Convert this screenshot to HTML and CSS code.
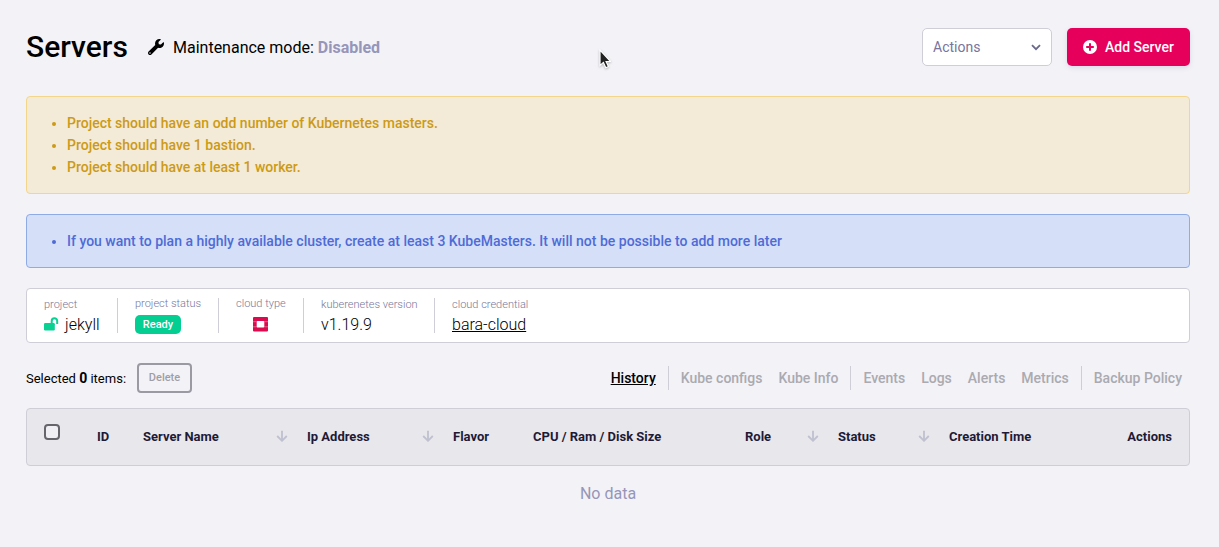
FILE: index.html
```html
<!DOCTYPE html>
<html lang="en">
<head>
<meta charset="utf-8">
<title>Servers</title>
<link rel="stylesheet" href="styles.css">
</head>
<body>
<svg class="sprite" aria-hidden="true">
  <symbol id="sort" viewBox="0 0 12 12"><path d="M6 .8v10M1.200 6 6 10.800 10.800 6" fill="none" stroke="currentColor" stroke-width="1.800"/></symbol>
</svg>
<main class="page">
  <header class="header">
    <h1 class="title">Servers</h1>
    <div class="maintenance">
      <svg class="wrench" viewBox="0 0 512 512"><path fill="currentColor" d="M507.730 109.100c-2.240-9.030-13.540-12.090-20.120-5.510l-74.360 74.360-67.880-11.310-11.310-67.880 74.360-74.360c6.620-6.620 3.430-17.900-5.660-20.160-47.380-11.740-99.550.910-136.580 37.930-39.640 39.640-50.550 97.100-34.050 147.200L18.740 402.760c-24.990 24.990-24.990 65.510 0 90.500 24.990 24.990 65.510 24.990 90.500 0l213.210-213.210c50.120 16.710 107.470 5.680 147.370-34.220 37.070-37.070 49.700-89.320 37.910-136.730zM64 472c-13.250 0-24-10.750-24-24 0-13.260 10.750-24 24-24s24 10.740 24 24c0 13.250-10.750 24-24 24z"/></svg>
      <span>Maintenance mode: <b>Disabled</b></span>
    </div>
    <button class="select"><span>Actions</span>
      <svg class="chevron" viewBox="0 0 10 7"><path d="M1 1.200l4 4 4-4" fill="none" stroke="currentColor" stroke-width="1.800"/></svg>
    </button>
    <button class="add">
      <svg class="plus" viewBox="0 0 14 14"><circle cx="7" cy="7" r="7" fill="currentColor"/><path class="plus-sign" d="M7 3.200v7.600M3.200 7h7.600"/></svg>
      <span>Add Server</span>
    </button>
  </header>

  <ul class="alert warning">
    <li>Project should have an odd number of Kubernetes masters.</li>
    <li>Project should have 1 bastion.</li>
    <li>Project should have at least 1 worker.</li>
  </ul>
  <ul class="alert info">
    <li>If you want to plan a highly available cluster, create at least 3 KubeMasters. It will not be possible to add more later</li>
  </ul>

  <section class="details">
    <div class="detail project"><span class="label">project</span>
      <span class="value"><svg class="lock" viewBox="0 0 15 14"><path d="M7.700 6.500V3.900a2.750 2.750 0 0 1 5.500 0V7" fill="none" stroke="currentColor" stroke-width="2"/><rect y="6" width="10.800" height="7.500" rx="1.200" fill="currentColor"/></svg>jekyll</span>
    </div>
    <div class="detail status"><span class="label">project status</span><span class="badge">Ready</span></div>
    <div class="detail cloud"><span class="label">cloud type</span>
      <svg class="openstack" viewBox="0 0 15 15"><path fill="currentColor" fill-rule="evenodd" d="M1 0h13a1 1 0 0 1 1 1v12.500a1 1 0 0 1-1 1H1a1 1 0 0 1-1-1V1a1 1 0 0 1 1-1zM4.500 4a.8.8 0 0 0-.8.8v5a.8.8 0 0 0 .8.8h6a.8.8 0 0 0 .8-.8v-5a.8.8 0 0 0-.8-.8z"/><path d="M0 4.700h3.700M11.300 4.700H15M0 9.800h3.700M11.300 9.800H15" stroke="#fff" stroke-opacity=".7" stroke-width=".5"/></svg>
    </div>
    <div class="detail version"><span class="label">kuberenetes version</span><span class="value">v1.19.9</span></div>
    <div class="detail credential"><span class="label">cloud credential</span><a class="value">bara-cloud</a></div>
  </section>

  <div class="toolbar">
    <span class="selected">Selected <b>0</b> items:</span>
    <button class="delete">Delete</button>
    <nav class="tabs">
      <div class="group"><a class="active">History</a></div>
      <div class="group"><a>Kube configs</a><a>Kube Info</a></div>
      <div class="group"><a>Events</a><a>Logs</a><a>Alerts</a><a>Metrics</a></div>
      <div class="group"><a>Backup Policy</a></div>
    </nav>
  </div>

  <div class="table-head">
    <span class="checkbox"></span>
    <span>ID</span>
    <span class="sortable">Server Name<svg><use href="#sort"/></svg></span>
    <span class="sortable">Ip Address<svg><use href="#sort"/></svg></span>
    <span>Flavor</span>
    <span>CPU / Ram / Disk Size</span>
    <span class="sortable">Role<svg><use href="#sort"/></svg></span>
    <span class="sortable">Status<svg><use href="#sort"/></svg></span>
    <span>Creation Time</span>
    <span>Actions</span>
  </div>
  <p class="empty">No data</p>
</main>
<svg class="cursor" viewBox="0 0 12 20"><path d="M1 1v15.500l3.400-3.100 2.400 5.300 2.600-1.200-2.300-5h4.500z" fill="#222" stroke="#fff" stroke-width="1.200"/></svg>
</body>
</html>
```
FILE: styles.css
```css
* { box-sizing: border-box; }

body {
  margin: 0;
  height: 547px;
  overflow: hidden;
  background: #f3f2f7;
  color: #000;
  font-family: Roboto, sans-serif;
}

button { font-family: inherit; }
svg { flex: none; }
.sprite { display: none; }

.page { padding: 28px 29px 0 26px; }

.header { display: flex; align-items: center; height: 38px; }
.title { margin: 0; font-size: 30px; line-height: 38px; font-weight: 500; width: 122px; }
.maintenance { display: flex; align-items: center; gap: 9px; font-size: 16px; }
.maintenance b { color: #9696ba; font-weight: 700; }
.wrench { width: 16px; height: 16px; }

.select {
  display: flex;
  align-items: center;
  justify-content: space-between;
  width: 130px;
  height: 38px;
  margin-left: auto;
  padding: 0 10px;
  border: 1px solid #cfced8;
  border-radius: 5px;
  background: #fff;
  color: #76759b;
  font-size: 14px;
}
.chevron { width: 10px; height: 7px; color: #69698a; }

.add {
  display: flex;
  align-items: center;
  gap: 8px;
  width: 123px;
  height: 38px;
  margin-left: 15px;
  padding: 0 0 0 16px;
  border: 0;
  border-radius: 5px;
  background: #e6005c;
  box-shadow: 0 2px 5px rgba(80, 80, 150, .13);
  color: #fff;
  font-size: 14px;
  font-weight: 500;
}
.plus { width: 14px; height: 14px; }
.plus-sign { stroke: #e6005c; stroke-width: 2; }

.alert {
  margin: 0;
  padding: 15px 0 15px 40px;
  border: 1px solid;
  border-radius: 4px;
  font-size: 14px;
  line-height: 22px;
  font-weight: 500;
}
.warning { height: 98px; margin-top: 30px; background: #f3ead7; border-color: #f3d68c; color: #cc9a16; }
.info { height: 54px; margin-top: 20px; background: #d5dff8; border-color: #8eabe5; color: #4e6bd6; }

.details {
  display: flex;
  height: 55px;
  margin-top: 20px;
  padding: 9px 0 0 17px;
  border: 1px solid #cfced8;
  border-radius: 4px;
  background: #fff;
}
.detail { display: flex; flex-direction: column; height: 35px; }
.detail + .detail { border-left: 1px solid #cfced8; padding-left: 17px; }
.label { color: #77779a; font-size: 11px; line-height: 13px; font-weight: 300; white-space: nowrap; }
.value { display: flex; align-items: center; margin-top: 5px; font-size: 16px; line-height: 18px; font-weight: 300; color: #000; }
.project { width: 73px; }
.status { width: 101px; }
.cloud { width: 85px; }
.version { width: 131px; }
.status .label, .cloud .label { margin-top: -1px; }
.lock { width: 15px; height: 14px; margin: -2px 6px 0 0; color: #0bd093; }
.badge {
  width: 46px;
  height: 19px;
  margin-top: 5px;
  border-radius: 5px;
  background: #04ce91;
  color: #fff;
  font-size: 11px;
  line-height: 19px;
  font-weight: 500;
  text-align: center;
}
.openstack { width: 15px; height: 15px; margin: 7px 0 0 17px; color: #dc0b50; }
.credential .value { text-decoration: underline; display: block; }

.toolbar { display: flex; align-items: center; height: 30px; margin-top: 20px; }
.selected { width: 111px; font-size: 13px; white-space: nowrap; }
.selected b { font-size: 14px; font-weight: 700; }
.delete {
  width: 55px;
  height: 30px;
  padding: 0 0 2px;
  border: 2px solid #9b9aa2;
  border-radius: 4px;
  background: transparent;
  color: #9f9ea6;
  font-size: 11px;
  font-weight: 500;
}
.tabs { display: flex; margin-left: auto; padding-right: 8px; color: #aaaab0; font-size: 14px; font-weight: 500; line-height: 24px; }
.group { display: flex; gap: 16px; }
.group + .group { margin-left: 12px; padding-left: 12px; border-left: 1px solid #cfced8; }
.active { color: #000; text-decoration: underline; }

.table-head {
  display: grid;
  grid-template-columns: 53px 46px 164px 146px 80px 212px 93px 111px 1fr auto;
  align-items: center;
  height: 58px;
  margin-top: 15px;
  padding: 0 17px 2px;
  border: 1px solid #cfced8;
  border-radius: 4px;
  background: #e8e7ec;
  color: #1e1a36;
  font-size: 13px;
  font-weight: 700;
  white-space: nowrap;
}
.checkbox { width: 16px; height: 16px; margin-bottom: 8px; border: 2px solid #66656c; border-radius: 4px; background: #f0eff3; }
.sortable { display: flex; align-items: center; justify-content: space-between; padding-right: 19px; }
.sortable svg { width: 12px; height: 12px; color: #bfc0d0; }

.empty { margin: 18px 0 0; color: #9696b8; font-size: 16px; line-height: 20px; text-align: center; }

.cursor { position: absolute; left: 599px; top: 49px; width: 12px; height: 20px; filter: drop-shadow(0 1px 1px rgba(0, 0, 0, .25)); }
```
